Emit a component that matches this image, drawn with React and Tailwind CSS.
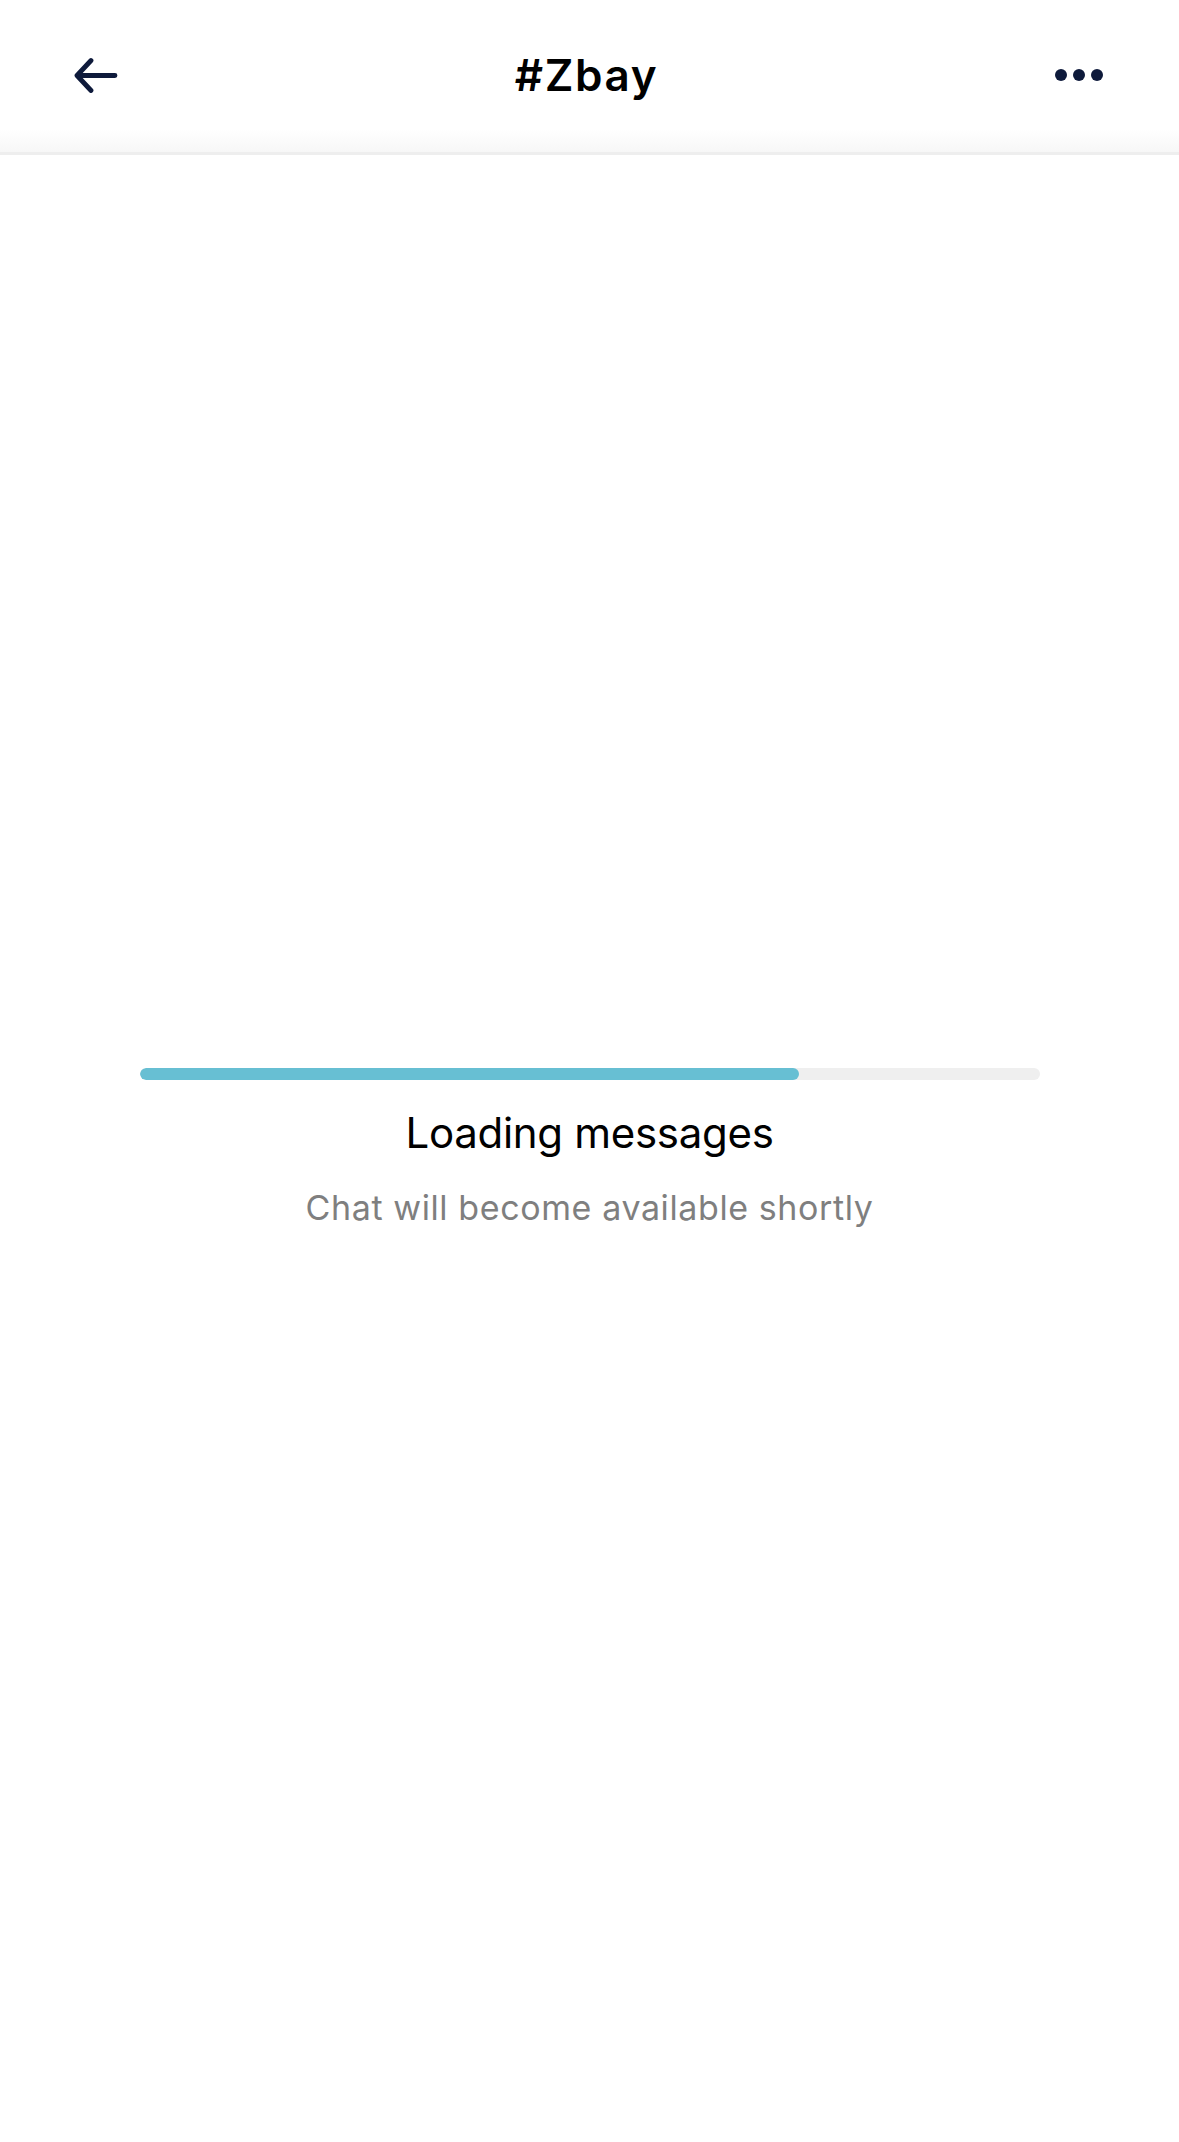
import React from 'react';

const BackArrow = () => (
  <svg width="44" height="36" viewBox="0 0 44 36" fill="none" className="text-[#0e1a3b]">
    <path d="M41 18.5H4M17 3.5L3 18.5L17 33.5" stroke="currentColor" strokeWidth="4.8" strokeLinecap="round" strokeLinejoin="round" />
  </svg>
);

const MoreDots = () => (
  <div className="flex items-center gap-[6px]">
    <span className="w-[12px] h-[12px] rounded-full bg-[#0e1a3b]" />
    <span className="w-[12px] h-[12px] rounded-full bg-[#0e1a3b]" />
    <span className="w-[12px] h-[12px] rounded-full bg-[#0e1a3b]" />
  </div>
);

const LoadingBar = ({ progress }) => (
  <div className="w-[900px] h-[12px] rounded-full bg-[#efefef] overflow-hidden">
    <div className="h-full rounded-full bg-[#67bfd3]" style={{ width: `${progress}%` }} />
  </div>
);

export default function App() {
  return (
    <div className="h-[2142px] w-full flex flex-col bg-white font-['Inter',sans-serif]">
      {/* header */}
      <div className="h-[155px] shrink-0 flex items-center justify-between pl-[74px] pr-[76px] pb-[3px] border-b-[3px] border-[#eeeeee] bg-gradient-to-b from-white from-[85%] to-[#f7f7f7]">
        <button className="w-[44px] flex items-center">
          <BackArrow />
        </button>
        <h1 className="text-[44px] leading-[50px] font-semibold text-black tracking-[1.6px]">#Zbay</h1>
        <div className="w-[48px] flex justify-end">
          <MoreDots />
        </div>
      </div>

      {/* body */}
      <div className="flex-1 flex flex-col items-center justify-center">
        <LoadingBar progress={73.3} />
        <p className="mt-[28px] text-[42px] leading-[50px] text-black tracking-[-0.3px]">Loading messages</p>
        <p className="mt-[28px] text-[34px] leading-[44px] text-[#7f7f7f] tracking-[0.6px]">Chat will become available shortly</p>
      </div>
    </div>
  );
}
